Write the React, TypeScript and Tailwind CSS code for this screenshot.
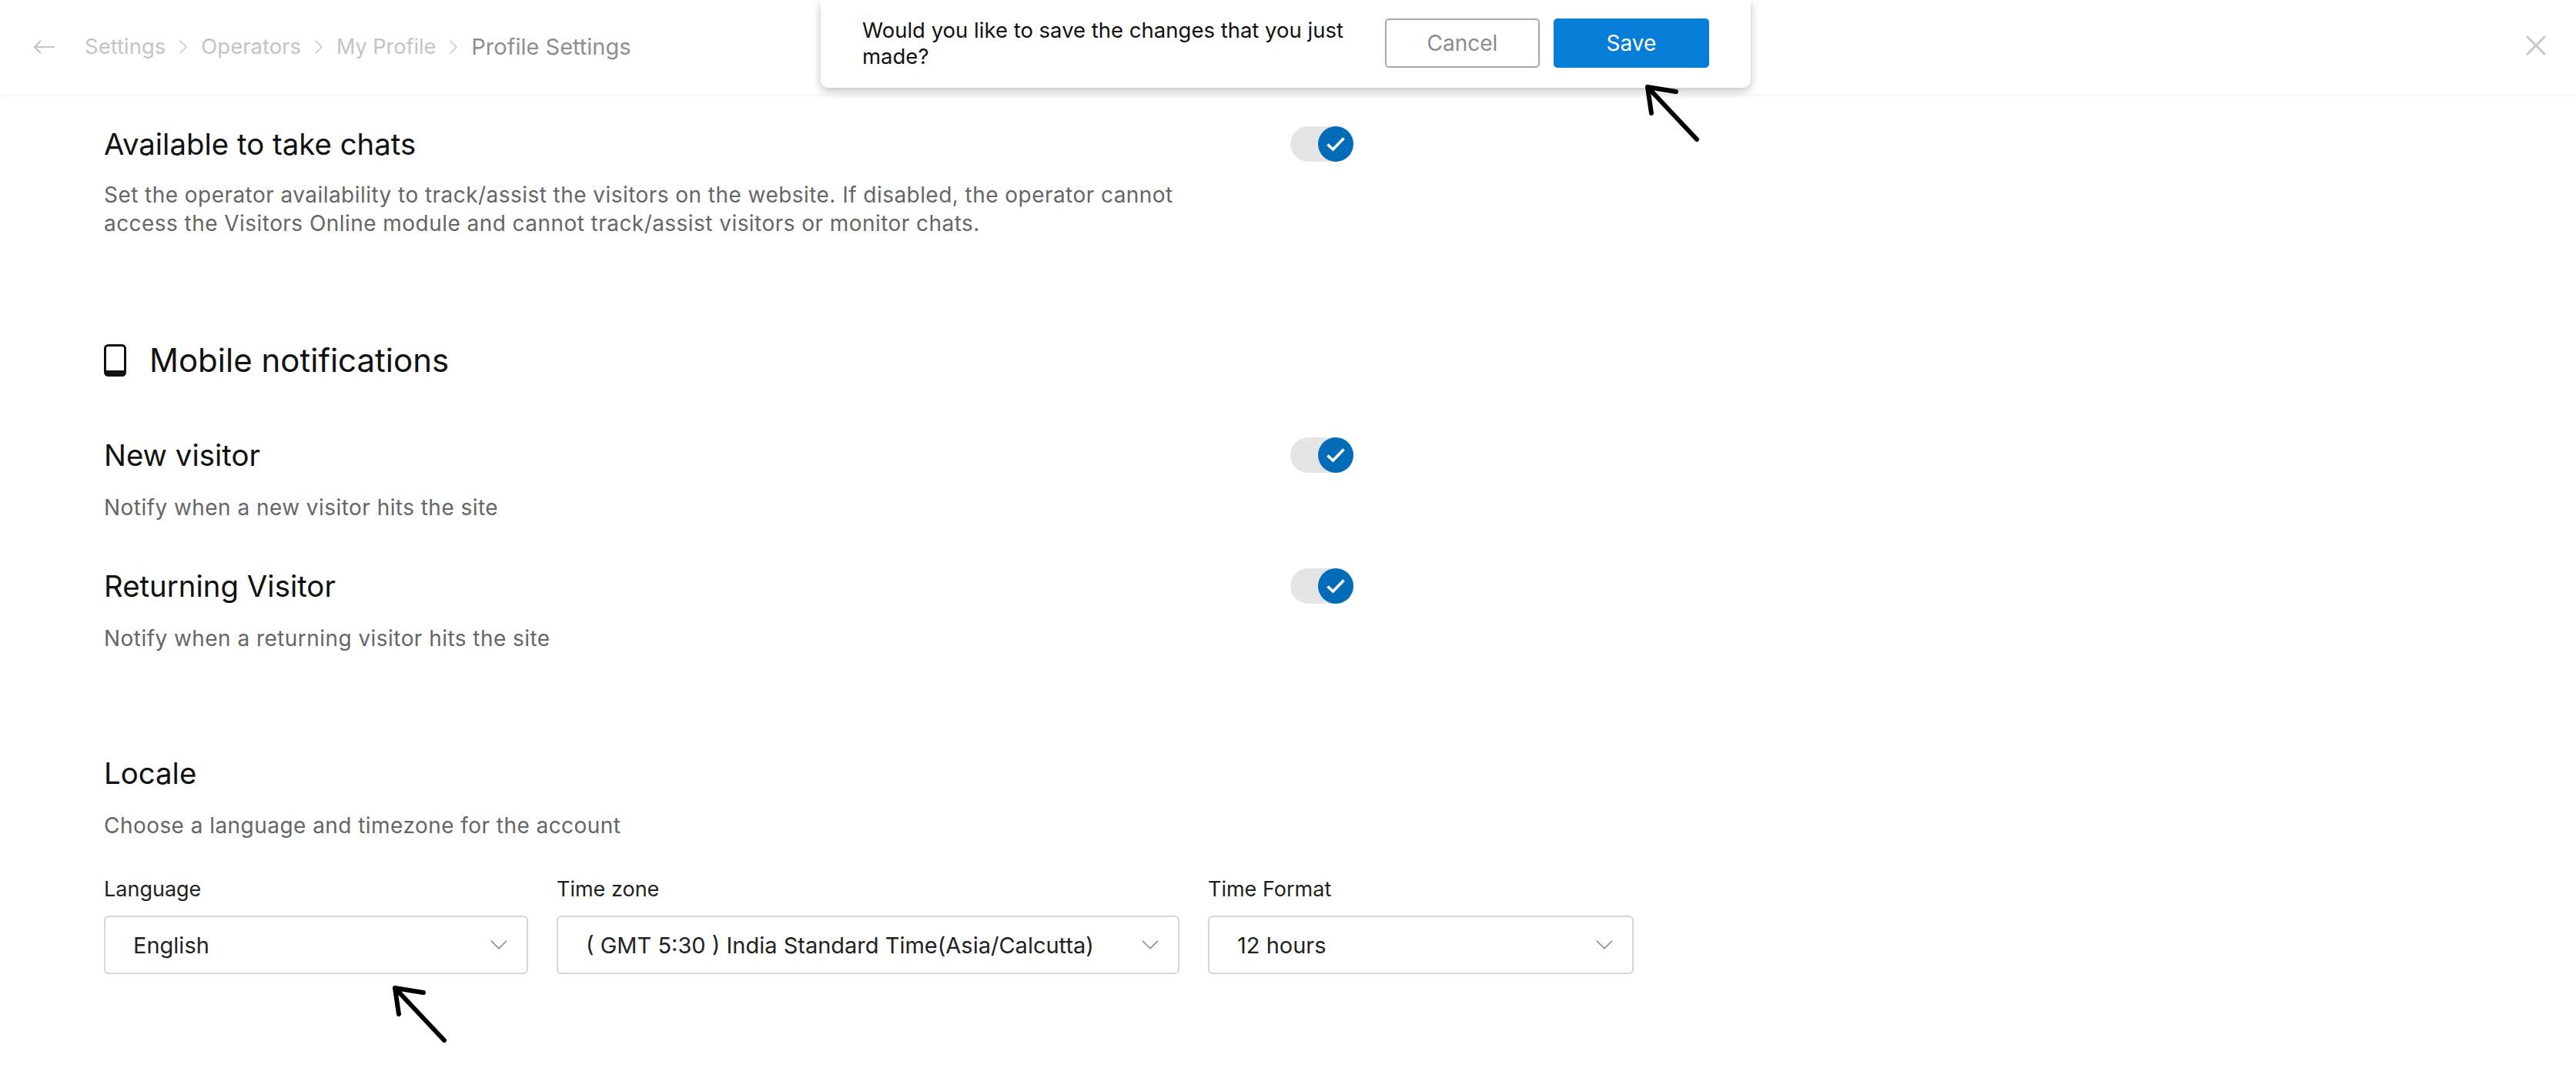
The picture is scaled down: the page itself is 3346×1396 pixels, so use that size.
import React from 'react';
import { ChevronDown, ChevronRight, X } from 'lucide-react';

function Toggle() {
  return (
    <div className="w-[82px] h-[46px] rounded-full bg-[#e5e5e5] flex justify-end shrink-0">
      <div className="w-[46px] h-[46px] rounded-full bg-[#036cb9] flex items-center justify-center">
        <svg width="24" height="20" viewBox="0 0 24 20" fill="none">
          <path d="M1.5 10.5 L8.5 17 L22.5 2.5" stroke="#fff" strokeWidth="3.6" />
        </svg>
      </div>
    </div>
  );
}

function SettingRow({ title, children, className, descClass }: { title: string; children: React.ReactNode; className?: string; descClass: string }) {
  return (
    <div className={className}>
      <div className="w-[1623px] h-[46px] flex items-center justify-between">
        <h3 className="text-[38.4px] leading-[46px] text-[#111111]">{title}</h3>
        <Toggle />
      </div>
      <p className={`w-[1460px] text-[28px] leading-[37px] text-[#666666] tracking-[0.45px] ${descClass}`}>{children}</p>
    </div>
  );
}

function SelectField({ label, value, className }: { label: string; value: string; className: string }) {
  return (
    <div className={className}>
      <label className="block text-[27px] leading-[36px] text-[#222222]">{label}</label>
      <div className="mt-[16px] h-[76px] rounded-[6px] border-2 border-[#d6d6d6] bg-white flex items-center justify-between pl-[36px] pr-[17px]">
        <span className="text-[29px] text-[#222222] mt-[2px]">{value}</span>
        <ChevronDown size={38} strokeWidth={1.1} className="text-[#8a8a8a]" />
      </div>
    </div>
  );
}

function Arrow({ className }: { className: string }) {
  return (
    <svg className={className} width="72" height="76" viewBox="0 0 72 76" fill="none">
      <path d="M4 4 L68 72 M4 4 L41 10 M4 4 L9 38" stroke="#000" strokeWidth="6" strokeLinecap="round" strokeLinejoin="round" />
    </svg>
  );
}

export default function App() {
  return (
    <div className="relative min-h-screen h-[1396px] overflow-hidden bg-white text-[#111111] font-['Inter',sans-serif]">
      {/* Header */}
      <header className="h-[122px] flex items-center justify-between pl-[43px] pr-[30px] shadow-[0_2px_4px_rgba(0,0,0,0.05)] bg-white">
        <div className="flex items-center text-[27.5px] text-[#c4c4c4]">
          <svg width="29" height="18" viewBox="0 0 29 18" fill="none" className="mr-[38px]">
            <path d="M28 9 H2 M10 1 L2 9 L10 17" stroke="#c4c4c4" strokeWidth="2.2" />
          </svg>
          <span>Settings</span>
          <ChevronRight size={32} strokeWidth={1.1} className="mx-[7px]" />
          <span>Operators</span>
          <ChevronRight size={32} strokeWidth={1.1} className="mx-[7px]" />
          <span className="text-[27px]">My Profile</span>
          <ChevronRight size={32} strokeWidth={1.1} className="mx-[7px]" />
          <span className="text-[29px] text-[#8f8f8f]">Profile Settings</span>
        </div>
        <X size={44} strokeWidth={1.7} className="text-[#c8c8c8] -mt-[5px]" />
      </header>

      {/* Save dialog */}
      <div className="absolute top-0 left-[1066px] w-[1208px] h-[114px] bg-white rounded-b-[10px] shadow-[0_4px_12px_rgba(0,0,0,0.25)] flex items-start pl-[54px] pr-[54px] pt-[22px]">
        <p className="w-[660px] text-[27.5px] leading-[34px] text-[#111111]">
          Would you like to save the changes that you just made?
        </p>
        <div className="ml-auto mt-[2px] flex gap-[18px]">
          <button className="w-[201px] h-[64px] rounded-[5px] border-2 border-[#a8a8a8] text-[28px] text-[#8c8c8c]">Cancel</button>
          <button className="w-[202px] h-[64px] rounded-[5px] bg-[#067ed5] text-[28px] text-white">Save</button>
        </div>
      </div>

      <main className="pl-[135px]">
        <SettingRow title="Available to take chats" className="pt-[42px]" descClass="mt-[25px]">
          Set the operator availability to track/assist the visitors on the website. If disabled, the operator cannot access the Visitors Online module and cannot track/assist visitors or monitor chats.
        </SettingRow>

        <div className="mt-[134px] flex items-center gap-[30px]">
          <svg width="29" height="42" viewBox="0 0 29 42" fill="none" className="shrink-0">
            <rect x="1.5" y="1.5" width="26" height="39" rx="4" stroke="#111" strokeWidth="3" />
            <path d="M2 34 H27 V37 a3 3 0 0 1 -3 3 H5 a3 3 0 0 1 -3 -3 Z" fill="#111" />
          </svg>
          <h2 className="text-[42px] leading-[50px] text-[#111111]">Mobile notifications</h2>
        </div>

        <SettingRow title="New visitor" className="mt-[75px]" descClass="mt-[27px]">Notify when a new visitor hits the site</SettingRow>
        <SettingRow title="Returning Visitor" className="mt-[60px]" descClass="mt-[27px]">Notify when a returning visitor hits the site</SettingRow>

        <h3 className="mt-[133px] text-[38.4px] leading-[46px] text-[#111111]">Locale</h3>
        <p className="mt-[27px] text-[28px] leading-[37px] text-[#666666] tracking-[0.45px]">Choose a language and timezone for the account</p>

        <div className="mt-[46px] flex gap-[37px]">
          <SelectField label="Language" value="English" className="w-[551px]" />
          <SelectField label="Time zone" value="( GMT 5:30 ) India Standard Time(Asia/Calcutta)" className="w-[809px]" />
          <SelectField label="Time Format" value="12 hours" className="w-[553px]" />
        </div>
      </main>

      {/* Annotation arrows */}
      <Arrow className="absolute left-[2136px] top-[109px]" />
      <Arrow className="absolute left-[509px] top-[1279px]" />
    </div>
  );
}
